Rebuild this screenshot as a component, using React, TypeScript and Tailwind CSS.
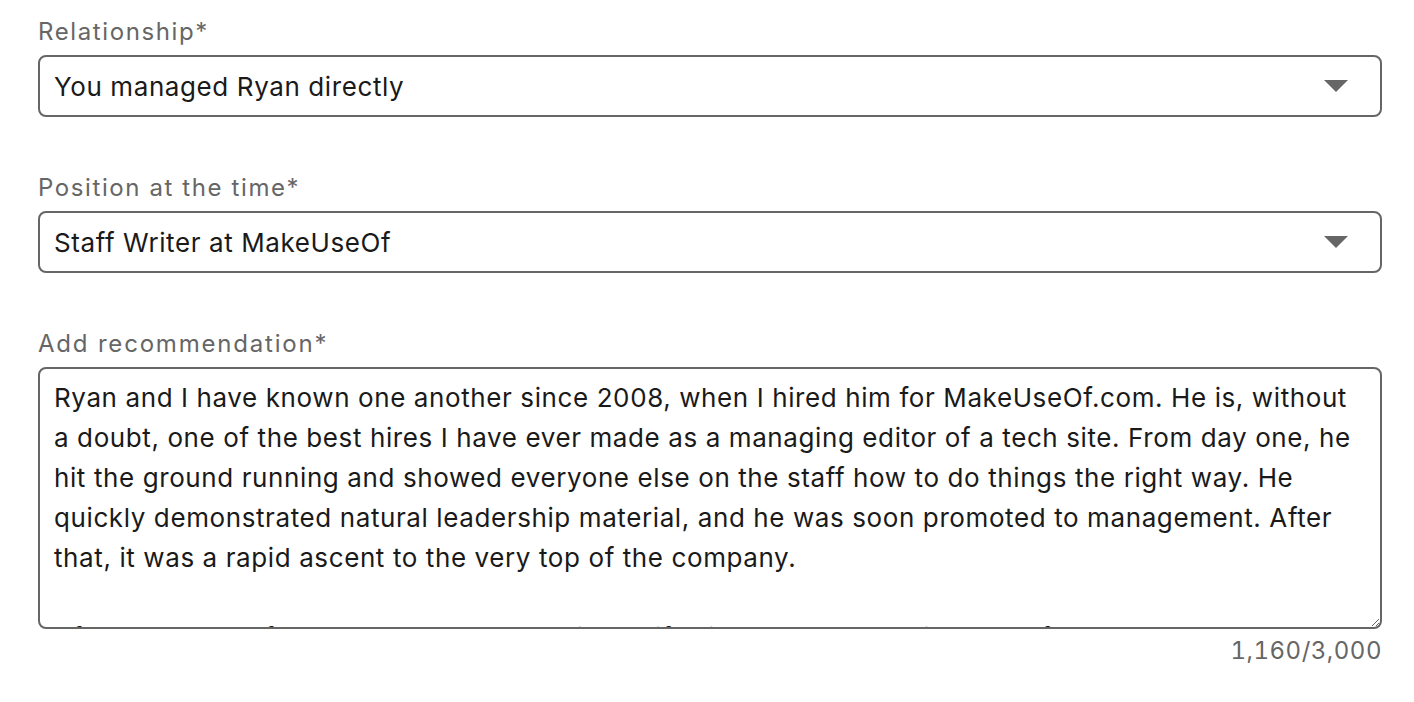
import { useState } from "react";

const recommendation =
  "Ryan and I have known one another since 2008, when I hired him for MakeUseOf.com. He is, without a doubt, one of the best hires I have ever made as a managing editor of a tech site. From day one, he hit the ground running and showed everyone else on the staff how to do things the right way. He quickly demonstrated natural leadership material, and he was soon promoted to management. After that, it was a rapid ascent to the very top of the company.\n\nAfter MakeUseOf, our paths crossed again at Lifewire and HIC, and in each of those roles he brought the same energy. Each team he joined became better for it.";

interface SelectFieldProps {
  label: string;
  value: string;
  options: string[];
  onChange: (value: string) => void;
}

const Caret = () => (
  <svg
    className="pointer-events-none absolute right-[34px] top-1/2 -translate-y-1/2"
    width="24"
    height="12"
    viewBox="0 0 24 12"
  >
    <path d="M0 0h24L12 12z" fill="#666666" />
  </svg>
);

const SelectField = ({ label, value, options, onChange }: SelectFieldProps) => {
  return (
    <div className="flex flex-col">
      <label className="text-[24px] leading-[30px] tracking-[1.6px] text-[#666666] mb-2">
        {label}
      </label>
      <div className="relative">
        <select
          value={value}
          onChange={(e) => onChange(e.target.value)}
          className="appearance-none w-full h-[62px] border-2 border-[#666666] rounded-lg bg-white px-[14px] text-[26px] tracking-[0.6px] text-[#1a1a1a] outline-none"
        >
          {options.map((o) => (
            <option key={o} value={o}>
              {o}
            </option>
          ))}
        </select>
        <Caret />
      </div>
    </div>
  );
};

export default function App() {
  const [relationship, setRelationship] = useState("You managed Ryan directly");
  const [position, setPosition] = useState("Staff Writer at MakeUseOf");
  const [text, setText] = useState(recommendation);

  return (
    <div
      className="min-h-screen bg-white pl-[38px] pr-[32px] pt-[17px] flex flex-col gap-[56px]"
      style={{ fontFamily: "Inter, 'Liberation Sans', sans-serif" }}
    >
      <SelectField
        label="Relationship*"
        value={relationship}
        options={[
          "You managed Ryan directly",
          "Ryan managed you directly",
          "You worked with Ryan on the same team",
        ]}
        onChange={setRelationship}
      />
      <SelectField
        label="Position at the time*"
        value={position}
        options={["Staff Writer at MakeUseOf", "Editor at MakeUseOf"]}
        onChange={setPosition}
      />
      <div className="flex flex-col">
        <label className="text-[24px] leading-[30px] tracking-[1.8px] text-[#666666] mb-2">
          Add recommendation*
        </label>
        <textarea
          value={text}
          onChange={(e) => setText(e.target.value)}
          className="w-full h-[262px] border-2 border-[#666666] rounded-lg bg-white pl-[14px] pr-[20px] pt-[9px] text-[26px] leading-[40px] tracking-[0.6px] text-[#1a1a1a] overflow-hidden outline-none"
        />
        <div className="mt-[7px] text-right text-[24px] leading-[30px] tracking-[0.5px] tabular-nums text-[#666666]">
          1,160/3,000
        </div>
      </div>
    </div>
  );
}
